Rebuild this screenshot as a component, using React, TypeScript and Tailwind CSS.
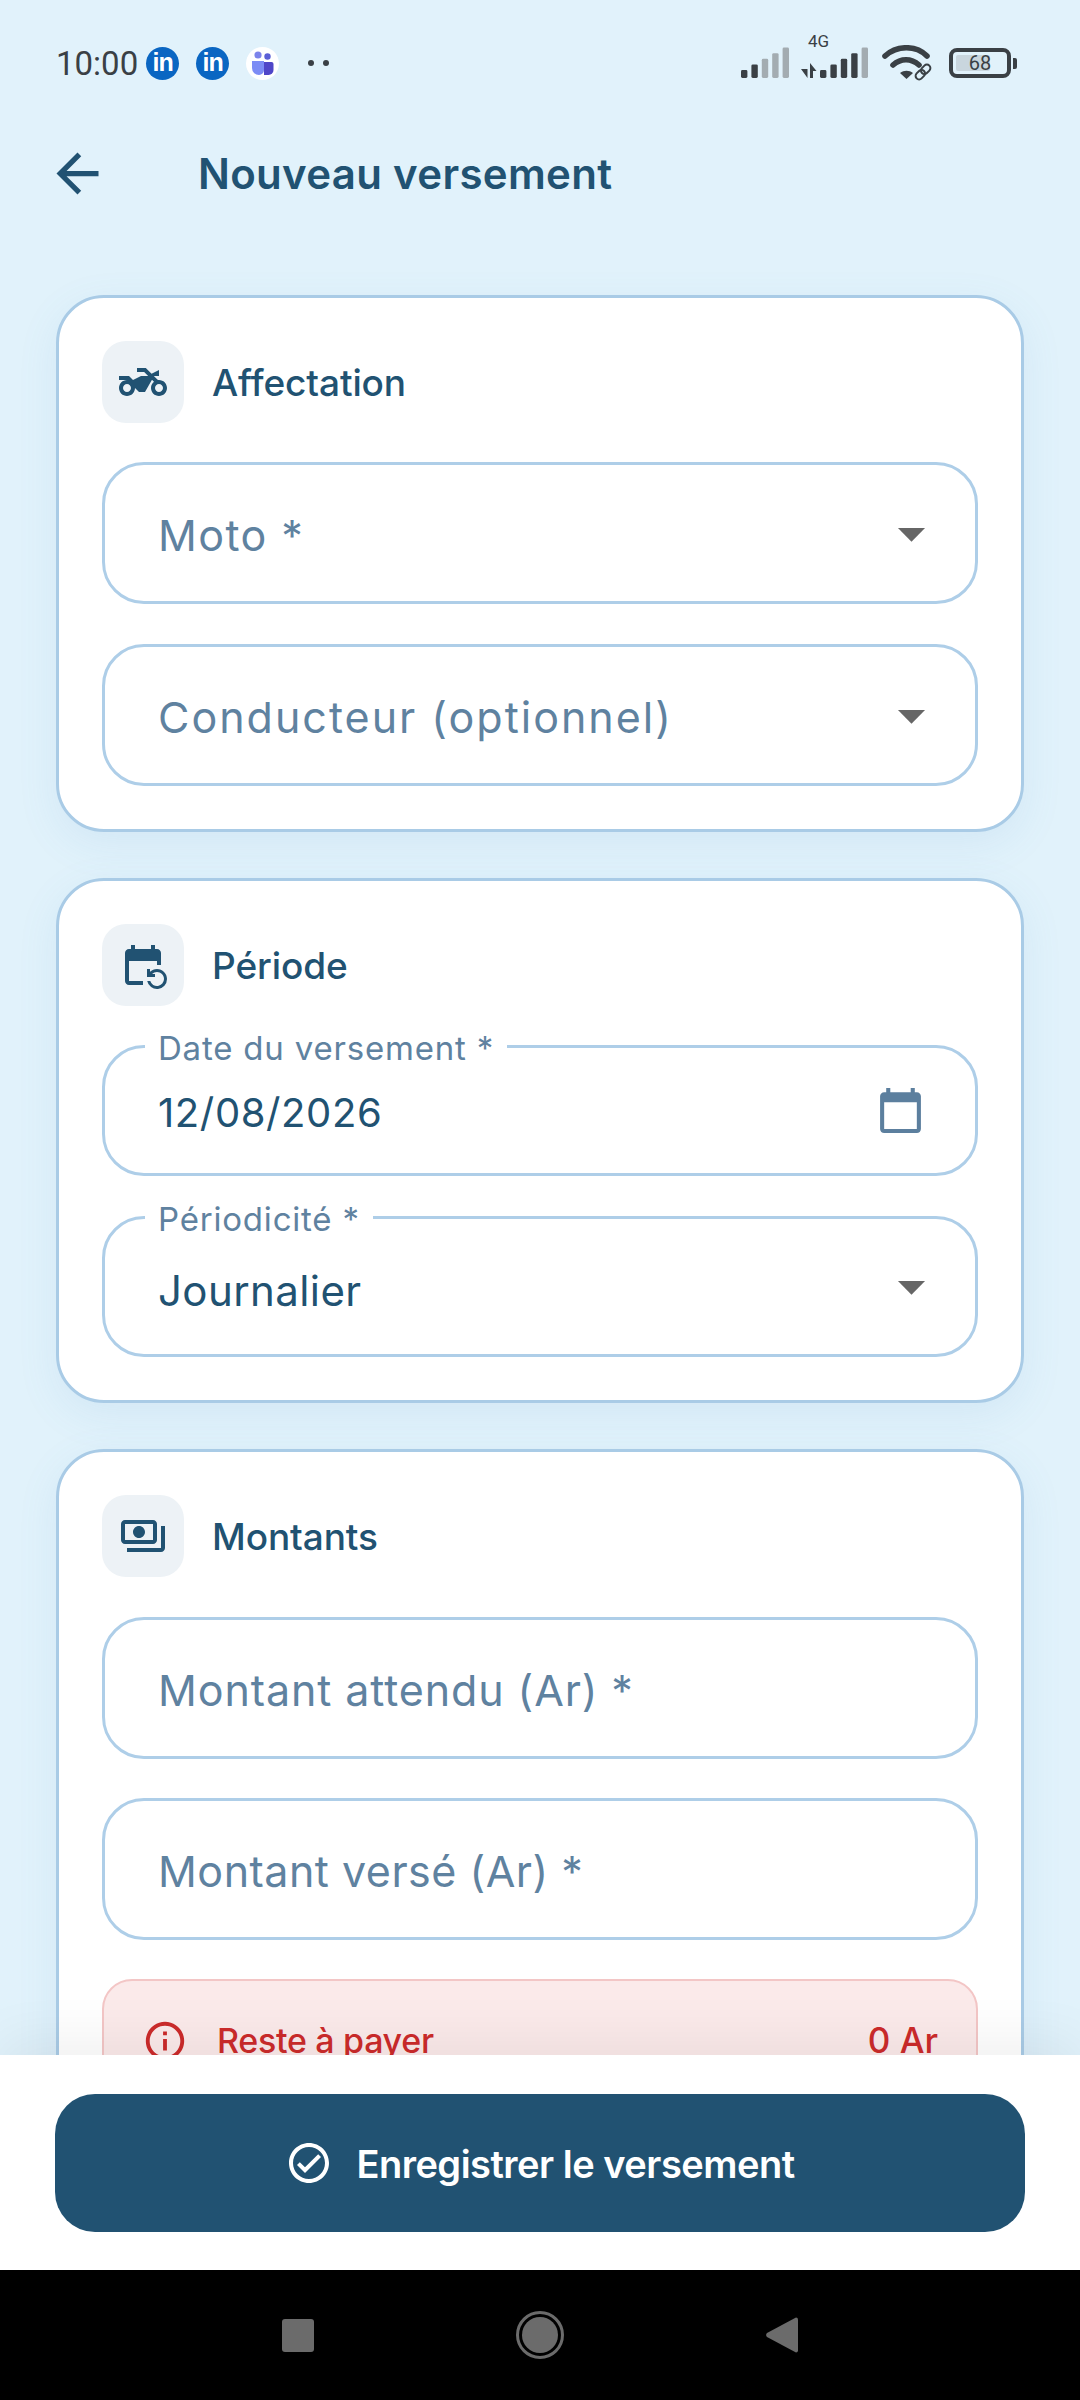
import React from 'react'
import {
  MdArrowBack,
  MdArrowDropDown,
  MdCalendarToday,
  MdEventRepeat,
  MdInfoOutline,
  MdOutlineCheckCircle,
  MdOutlinePayments,
  MdTwoWheeler,
} from 'react-icons/md'

const SignalBars = ({ lit }: { lit: number }) => (
  <svg width="48" height="32" viewBox="0 0 48 32">
    {[0, 1, 2, 3, 4].map((i) => {
      const h = 8 + i * 5.6
      return (
        <rect
          key={i}
          x={i * 10.4}
          y={31 - h}
          width="6.4"
          height={h}
          rx="1.4"
          fill={i < lit ? '#3a4045' : '#a3acb1'}
        />
      )
    })}
  </svg>
)

const LinkedinBadge = () => (
  <span className="flex h-[33px] w-[33px] items-center justify-center rounded-full bg-[#0a66c2] pb-[1px] font-['Liberation_Sans',sans-serif] text-[25px] leading-none font-bold tracking-[-1px] text-white">
    in
  </span>
)

const TeamsBadge = () => (
  <span className="flex h-[33px] w-[33px] items-center justify-center rounded-full bg-white">
    <svg width="24" height="26" viewBox="0 0 24 26">
      <circle cx="7" cy="5" r="3.6" fill="#7b83eb" />
      <circle cx="16.5" cy="6.5" r="3.2" fill="#5a5fd6" />
      <path d="M1 11h12v9a5 5 0 0 1-5 5 7 7 0 0 1-7-7z" fill="#7c8cf5" />
      <path d="M13 12h7.5a2 2 0 0 1 2 2v6a5 5 0 0 1-5 5h-4.5z" fill="#4f46c8" />
    </svg>
  </span>
)

const StatusBar = () => (
  <div className="flex h-[126px] items-center justify-between pr-[63px] pl-[56px] text-[#3a4045]">
    <div className="flex items-center">
      <span className="mr-[8px] font-['Roboto',sans-serif] text-[33px] leading-none">10:00</span>
      <div className="flex items-center gap-[17px]">
        <LinkedinBadge />
        <LinkedinBadge />
        <TeamsBadge />
      </div>
      <div className="ml-[29px] flex gap-[9px]">
        <span className="h-[6px] w-[6px] rounded-full bg-[#3a4045]" />
        <span className="h-[6px] w-[6px] rounded-full bg-[#3a4045]" />
      </div>
    </div>
    <div className="flex items-center">
      <SignalBars lit={2} />
      <div className="relative ml-[12px] flex items-end">
        <span className="absolute top-[-14px] left-[7px] font-['Roboto',sans-serif] text-[17px] leading-none">4G</span>
        <svg width="16" height="32" viewBox="0 0 16 32">
          <path d="M0 22h6.5v9zM9 16l6.5 8H12v7H9z" fill="#3a4045" />
        </svg>
        <div className="ml-[3px]">
          <SignalBars lit={4} />
        </div>
      </div>
      <svg className="ml-[14px]" width="52" height="36" viewBox="0 0 52 36" fill="none">
        <path d="M3 11C15 0 34 0 45 11" stroke="#3a4045" strokeWidth="5.6" strokeLinecap="round" />
        <path d="M11 20c8-7 18-7 26 0" stroke="#3a4045" strokeWidth="5.6" strokeLinecap="round" />
        <path d="M18 28l6.5 6 6.5-6c-4-3-9-3-13 0z" fill="#3a4045" />
        <g transform="rotate(-45 41 27)" stroke="#3a4045" strokeWidth="2">
          <rect x="32" y="23.5" width="10.5" height="7" rx="3.5" />
          <rect x="39.5" y="23.5" width="10.5" height="7" rx="3.5" />
        </g>
      </svg>
      <div className="ml-[15px] flex items-center">
        <div className="relative flex h-[30px] w-[62px] items-center justify-center rounded-[8px] border-[4px] border-[#3a4045]">
          <span className="absolute top-[3px] bottom-[3px] left-[3px] w-[34px] rounded-[2px] bg-[#c9d6de]" />
          <span className="relative font-['Roboto',sans-serif] text-[20px] leading-none">68</span>
        </div>
        <span className="ml-[2px] h-[11px] w-[4px] rounded-r-[2px] bg-[#3a4045]" />
      </div>
    </div>
  </div>
)

const Header = () => (
  <div className="flex h-[94px] items-center pl-[46px]">
    <MdArrowBack size={63} className="text-[#215272]" />
    <h1 className="ml-[89px] font-['Inter',sans-serif] text-[42px] font-semibold tracking-[0.3px] text-[#215272]">
      Nouveau versement
    </h1>
  </div>
)

const SectionCard = ({
  icon,
  title,
  children,
}: {
  icon: React.ReactNode
  title: string
  children: React.ReactNode
}) => (
  <div className="rounded-[48px] border-[3px] border-[#a9cbe6] bg-white px-[43px] pt-[43px] pb-[43px] shadow-[0_12px_40px_rgba(90,150,200,0.1)]">
    <div className="flex items-center gap-[28px]">
      <div className="flex h-[82px] w-[82px] items-center justify-center rounded-[24px] bg-[#edf2f6] text-[#215272]">
        {icon}
      </div>
      <span className="pt-[2px] font-['Inter',sans-serif] text-[37px] font-medium tracking-[-0.1px] text-[#215272]">{title}</span>
    </div>
    {children}
  </div>
)

const EmptyField = ({
  label,
  caret,
  spacing,
}: {
  label: string
  caret?: boolean
  spacing: string
}) => (
  <div className="flex h-[142px] items-center justify-between rounded-[42px] border-[3px] border-[#aecee8] pr-[31px] pl-[53px]">
    <span className={`pt-[4px] font-['Inter',sans-serif] text-[43px] text-[#5f82a0] ${spacing}`}>{label}</span>
    {caret && <MdArrowDropDown size={65} className="text-[#666666]" />}
  </div>
)

const FilledField = ({
  label,
  value,
  height,
  valueClass,
  trailing,
}: {
  label: string
  value: string
  height: string
  valueClass: string
  trailing: React.ReactNode
}) => (
  <div className={`relative flex items-start justify-between rounded-[42px] border-[3px] border-[#aecee8] pl-[53px] ${height}`}>
    <span className="absolute top-[-18px] left-[40px] bg-white px-[13px] font-['Inter',sans-serif] text-[33px] leading-[36px] tracking-[0.8px] text-[#5f82a0]">
      {label}
    </span>
    <span className={`font-['Inter',sans-serif] text-[#215272] ${valueClass}`}>{value}</span>
    {trailing}
  </div>
)

const App = () => {
  return (
    <div className="flex h-[2400px] w-[1080px] flex-col overflow-hidden bg-[#e1f2fb]">
      <StatusBar />
      <Header />

      <div className="relative min-h-0 flex-1 overflow-hidden">
        <div className="flex flex-col gap-[46px] px-[56px] pt-[75px]">
          <SectionCard icon={<MdTwoWheeler size={48} />} title="Affectation">
            <div className="mt-[39px] flex flex-col gap-[40px]">
              <EmptyField label="Moto *" caret spacing="tracking-[1.4px]" />
              <EmptyField label="Conducteur (optionnel)" caret spacing="tracking-[2px]" />
            </div>
          </SectionCard>

          <SectionCard icon={<MdEventRepeat size={48} />} title="Période">
            <div className="mt-[39px] flex flex-col gap-[40px]">
              <FilledField
                label="Date du versement *"
                value="12/08/2026"
                height="h-[131px]"
                valueClass="mt-[41px] text-[40px] leading-[48px] tracking-[0.6px]"
                trailing={<MdCalendarToday size={49} className="mt-[38px] mr-[50px] text-[#5c7f9e]" />}
              />
              <FilledField
                label="Périodicité *"
                value="Journalier"
                height="h-[141px]"
                valueClass="mt-[46px] text-[42px] leading-[52px] tracking-[0.4px]"
                trailing={<MdArrowDropDown size={65} className="mt-[35px] mr-[31px] text-[#666666]" />}
              />
            </div>
          </SectionCard>

          <SectionCard icon={<MdOutlinePayments size={48} />} title="Montants">
            <div className="mt-[40px] flex flex-col gap-[39px]">
              <EmptyField label="Montant attendu (Ar) *" spacing="tracking-[0.9px]" />
              <EmptyField label="Montant versé (Ar) *" spacing="tracking-[0.5px]" />
              <div className="flex h-[120px] items-center justify-between rounded-[30px] border-2 border-[#f3c6c6] bg-[#fbeaea] pt-[3px] pr-[38px] pl-[38px]">
                <div className="flex items-center gap-[29px]">
                  <MdInfoOutline size={46} className="text-[#cc2b2b]" />
                  <span className="font-['Inter',sans-serif] text-[34px] font-medium tracking-[-0.3px] text-[#cc2b2b]">Reste à payer</span>
                </div>
                <span className="font-['Inter',sans-serif] text-[35px] font-medium text-[#cc2b2b]">0 Ar</span>
              </div>
            </div>
          </SectionCard>
        </div>
      </div>

      <div className="z-10 flex h-[215px] shrink-0 items-start bg-white px-[55px] pt-[39px] shadow-[0_-16px_50px_rgba(0,0,0,0.06)]">
        <button className="flex h-[138px] w-full items-center justify-center gap-[23px] rounded-[40px] bg-[#215272] text-white">
          <MdOutlineCheckCircle size={48} />
          <span className="pt-[2px] font-['Inter',sans-serif] text-[38px] font-semibold tracking-[-0.5px]">Enregistrer le versement</span>
        </button>
      </div>

      <div className="flex h-[130px] shrink-0 items-center justify-center gap-[202px] bg-black">
        <span className="h-[33px] w-[32px] rounded-[3px] bg-[#6b6b6b]" />
        <span className="flex h-[48px] w-[48px] items-center justify-center rounded-full border-[3px] border-[#6b6b6b]">
          <span className="h-[36px] w-[36px] rounded-full bg-[#6b6b6b]" />
        </span>
        <svg width="32" height="36" viewBox="0 0 32 36">
          <path d="M30 0.5a2 2 0 0 1 2 2v31a2 2 0 0 1-2 2L1 20a3 3 0 0 1 0-4z" fill="#6b6b6b" />
        </svg>
      </div>
    </div>
  )
}

export default App
